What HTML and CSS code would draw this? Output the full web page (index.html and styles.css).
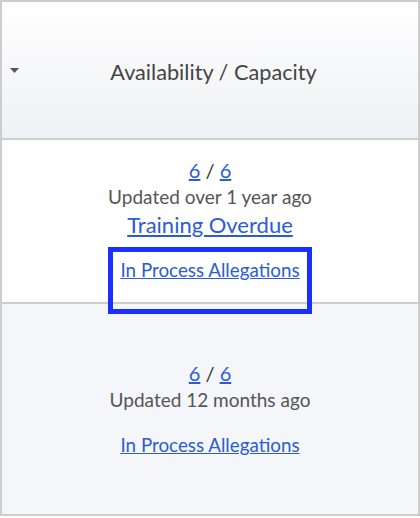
FILE: index.html
```html
<!DOCTYPE html>
<html lang="en">
<head>
<meta charset="utf-8">
<title>Availability / Capacity</title>
<link rel="stylesheet" href="styles.css">
</head>
<body>
<div class="table">
  <div class="head">
    <svg class="caret" width="9" height="5" viewBox="0 0 9 5"><path d="M0 0H9L4.5 5Z" fill="#555"/></svg>
    <div class="title">Availability / Capacity</div>
  </div>
  <div class="row row-first">
    <div class="counts"><a href="#">6</a> / <a href="#">6</a></div>
    <div class="updated">Updated over 1 year ago</div>
    <div class="training"><a href="#">Training Overdue</a></div>
    <div class="alleg focused"><a href="#">In Process Allegations</a></div>
  </div>
  <div class="row row-alt">
    <div class="counts"><a href="#">6</a> / <a href="#">6</a></div>
    <div class="updated">Updated 12 months ago</div>
    <div class="alleg alleg-spaced"><a href="#">In Process Allegations</a></div>
  </div>
</div>
</body>
</html>
```
FILE: styles.css
```css
* { box-sizing: border-box; }
html, body { margin: 0; padding: 0; background: #fff; }
body { font-family: Lato, "Open Sans", sans-serif; color: #333; }
a { color: #2c5cd4; text-decoration: underline; }

.table {
  width: 420px;
  border: 2px solid #cdcdcd;
  border-bottom: none;
}
.head {
  height: 138px;
  border-bottom: 2px solid #cdcdcd;
  background: linear-gradient(#ffffff, #f0f1f5);
  display: flex;
  align-items: center;
}
.caret { margin-left: 8px; flex: none; display: block; }
.title {
  flex: 1;
  text-align: center;
  font-size: 21.7px;
  line-height: 26px;
  color: #444;
  padding-right: 10px;
  margin-top: 3px;
}
.row {
  display: flex;
  flex-direction: column;
  align-items: center;
  border-bottom: 2px solid #cdcdcd;
}
.row-first { height: 164px; padding-top: 16px; background: #fff; }
.row-alt { height: 212px; padding-top: 55px; background: #f4f6fa; }

.counts { font-size: 20px; line-height: 28px; color: #333; }
.updated { font-size: 19px; line-height: 25px; color: #555; }
.training { font-size: 22px; line-height: 32px; }
.alleg {
  font-size: 18.8px;
  line-height: 24px;
  margin-top: 11px;
  padding: 6px 7px 27px;
}
.alleg-spaced { margin-top: 15px; }
.focused { outline: 5px solid #1a30ff; }
```
